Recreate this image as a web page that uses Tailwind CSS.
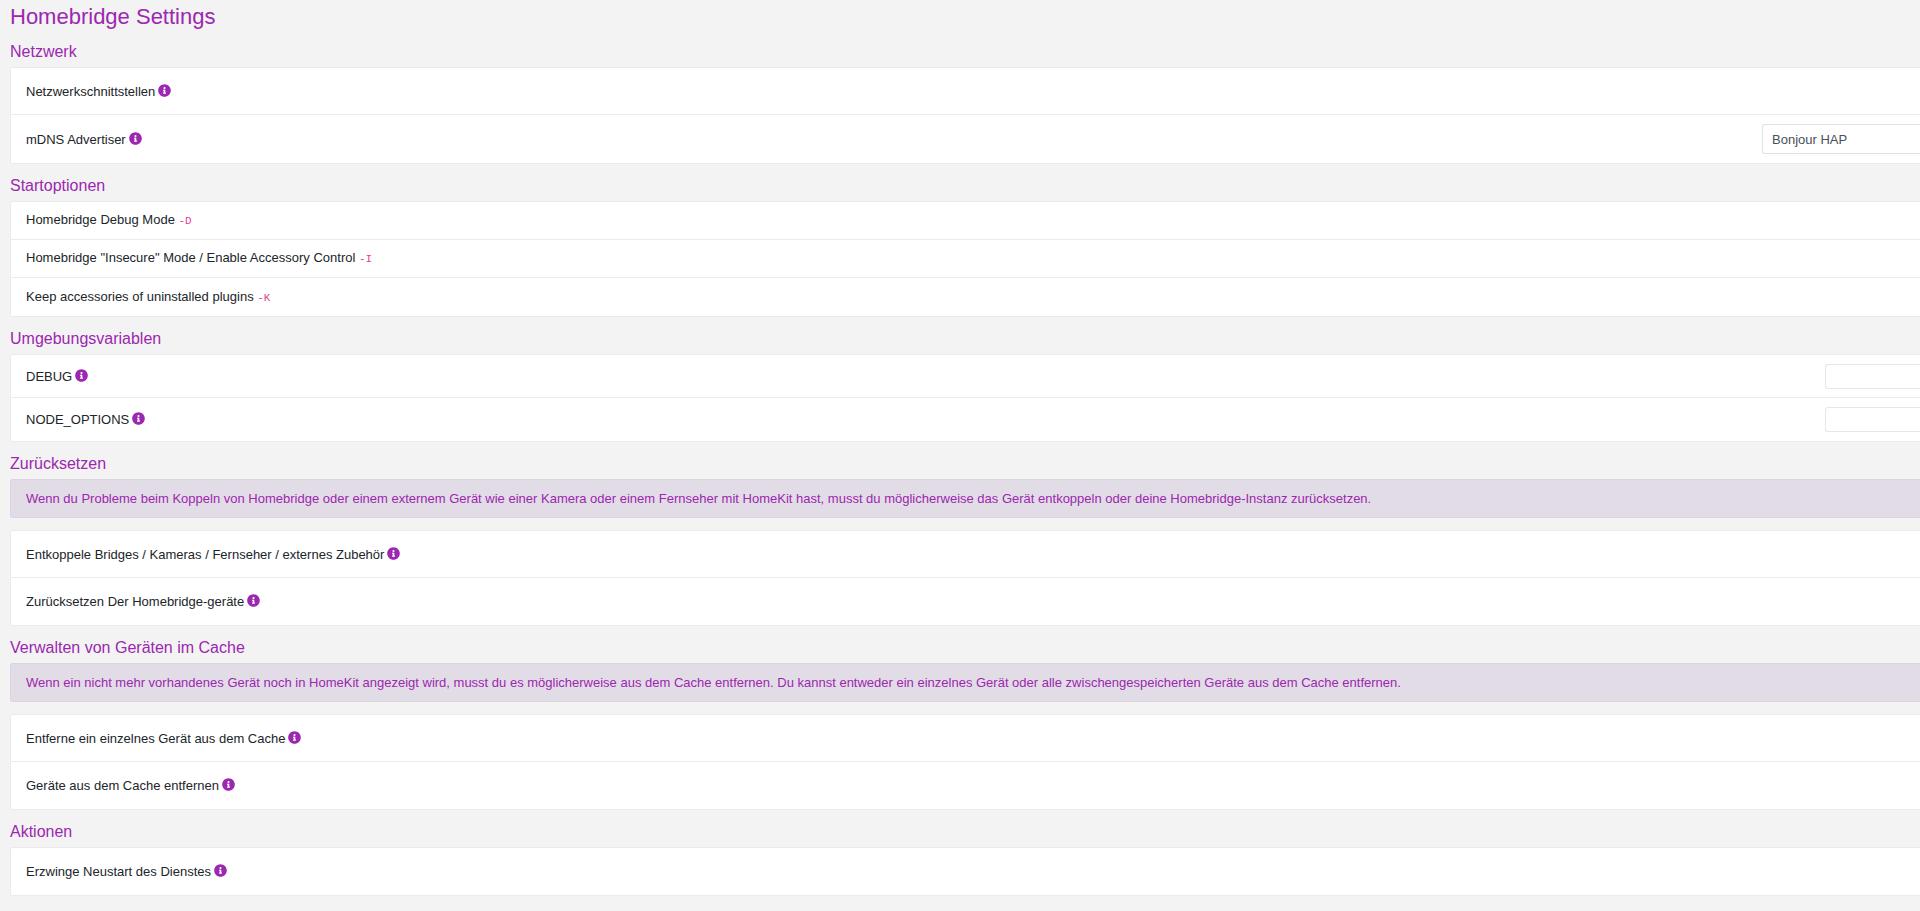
<!DOCTYPE html>
<html lang="de">
<head>
<meta charset="utf-8">
<title>Homebridge Settings</title>
<script src="https://cdn.jsdelivr.net/npm/@tailwindcss/browser@4"></script>
</head>
<body class="min-h-screen overflow-x-hidden bg-[#f3f3f3] font-['Liberation_Sans',Arial,sans-serif] text-[13px] leading-[19px] text-[#212529]">
<svg class="hidden" aria-hidden="true">
  <symbol id="info" viewBox="0 0 512 512"><path fill="currentColor" d="M256 8C119 8 8 119 8 256s111 248 248 248 248-111 248-248S393 8 256 8zm0 110c23 0 42 19 42 42s-19 42-42 42-42-19-42-42 19-42 42-42zm56 254c0 7-5 12-12 12h-88c-7 0-12-5-12-12v-24c0-7 5-12 12-12h12v-64h-12c-7 0-12-5-12-12v-24c0-7 5-12 12-12h64c7 0 12 5 12 12v100h12c7 0 12 5 12 12v24z"/></symbol>
</svg>
<main class="pl-[10px]">
  <h1 class="pt-1 text-[22px] leading-[26px] text-[#9c27b0]">Homebridge Settings</h1>

  <section>
    <h2 class="pt-[12px] pb-[5px] text-[16px] leading-5 text-[#9c27b0]">Netzwerk</h2>
    <ul class="divide-y divide-[#ebebeb] rounded-l-[2px] border border-r-0 border-[#ebebeb] bg-white">
      <li class="flex h-[47px] items-center gap-[3px] pl-[15px]">Netzwerkschnittstellen <button type="button" aria-label="Info" class="pb-[2px] text-[#9c27b0]"><svg class="size-[13px]"><use href="#info"/></svg></button></li>
      <li class="flex h-[48px] items-center gap-[3px] pl-[15px]"><label for="mdns">mDNS Advertiser</label> <button type="button" aria-label="Info" class="pb-[2px] text-[#9c27b0]"><svg class="size-[13px]"><use href="#info"/></svg></button>
        <select id="mdns" class="ml-auto h-[30px] w-[158px] appearance-none rounded-l-[3px] border border-r-0 border-[#dfe2e6] bg-white pl-[9px] text-[#495057]"><option>Bonjour HAP</option></select></li>
    </ul>
  </section>

  <section>
    <h2 class="pt-[12px] pb-[5px] text-[16px] leading-5 text-[#9c27b0]">Startoptionen</h2>
    <ul class="divide-y divide-[#ebebeb] rounded-l-[2px] border border-r-0 border-[#ebebeb] bg-white">
      <li class="flex h-[38px] items-center pl-[15px]"><span>Homebridge Debug Mode <code class="font-['Liberation_Mono',monospace] text-[11px] text-[#e83e8c]">-D</code></span></li>
      <li class="flex h-[38px] items-center pl-[15px]"><span>Homebridge "Insecure" Mode / Enable Accessory Control <code class="font-['Liberation_Mono',monospace] text-[11px] text-[#e83e8c]">-I</code></span></li>
      <li class="flex h-[38px] items-center pl-[15px]"><span>Keep accessories of uninstalled plugins <code class="font-['Liberation_Mono',monospace] text-[11px] text-[#e83e8c]">-K</code></span></li>
    </ul>
  </section>

  <section>
    <h2 class="pt-[12px] pb-[5px] text-[16px] leading-5 text-[#9c27b0]">Umgebungsvariablen</h2>
    <ul class="divide-y divide-[#ebebeb] rounded-l-[2px] border border-r-0 border-[#ebebeb] bg-white">
      <li class="flex h-[43px] items-center gap-[3px] pl-[15px]"><label for="debug">DEBUG</label> <button type="button" aria-label="Info" class="pb-[2px] text-[#9c27b0]"><svg class="size-[13px]"><use href="#info"/></svg></button>
        <input id="debug" type="text" class="ml-auto h-[25px] w-[95px] rounded-l-[3px] border border-r-0 border-[#e6e7ea] bg-white px-2"></li>
      <li class="flex h-[43px] items-center gap-[3px] pl-[15px]"><label for="node">NODE_OPTIONS</label> <button type="button" aria-label="Info" class="pb-[2px] text-[#9c27b0]"><svg class="size-[13px]"><use href="#info"/></svg></button>
        <input id="node" type="text" class="ml-auto h-[25px] w-[95px] rounded-l-[3px] border border-r-0 border-[#e6e7ea] bg-white px-2"></li>
    </ul>
  </section>

  <section>
    <h2 class="pt-[12px] pb-[5px] text-[16px] leading-5 text-[#9c27b0]">Zurücksetzen</h2>
    <p class="mb-3 rounded-l-[3px] border border-r-0 border-[#dad4e0] bg-[#e2dce6] py-[9px] pl-[15px] text-[#9c27b0]">Wenn du Probleme beim Koppeln von Homebridge oder einem externem Gerät wie einer Kamera oder einem Fernseher mit HomeKit hast, musst du möglicherweise das Gerät entkoppeln oder deine Homebridge-Instanz zurücksetzen.</p>
    <ul class="divide-y divide-[#ebebeb] rounded-l-[2px] border border-r-0 border-[#ebebeb] bg-white">
      <li class="flex h-[47px] items-center gap-[3px] pl-[15px]">Entkoppele Bridges / Kameras / Fernseher / externes Zubehör <button type="button" aria-label="Info" class="pb-[2px] text-[#9c27b0]"><svg class="size-[13px]"><use href="#info"/></svg></button></li>
      <li class="flex h-[47px] items-center gap-[3px] pl-[15px]">Zurücksetzen Der Homebridge-geräte <button type="button" aria-label="Info" class="pb-[2px] text-[#9c27b0]"><svg class="size-[13px]"><use href="#info"/></svg></button></li>
    </ul>
  </section>

  <section>
    <h2 class="pt-[12px] pb-[5px] text-[16px] leading-5 text-[#9c27b0]">Verwalten von Geräten im Cache</h2>
    <p class="mb-3 rounded-l-[3px] border border-r-0 border-[#dad4e0] bg-[#e2dce6] py-[9px] pl-[15px] text-[#9c27b0]">Wenn ein nicht mehr vorhandenes Gerät noch in HomeKit angezeigt wird, musst du es möglicherweise aus dem Cache entfernen. Du kannst entweder ein einzelnes Gerät oder alle zwischengespeicherten Geräte aus dem Cache entfernen.</p>
    <ul class="divide-y divide-[#ebebeb] rounded-l-[2px] border border-r-0 border-[#ebebeb] bg-white">
      <li class="flex h-[47px] items-center gap-[3px] pl-[15px]">Entferne ein einzelnes Gerät aus dem Cache <button type="button" aria-label="Info" class="pb-[2px] text-[#9c27b0]"><svg class="size-[13px]"><use href="#info"/></svg></button></li>
      <li class="flex h-[47px] items-center gap-[3px] pl-[15px]">Geräte aus dem Cache entfernen <button type="button" aria-label="Info" class="pb-[2px] text-[#9c27b0]"><svg class="size-[13px]"><use href="#info"/></svg></button></li>
    </ul>
  </section>

  <section>
    <h2 class="pt-[12px] pb-[5px] text-[16px] leading-5 text-[#9c27b0]">Aktionen</h2>
    <ul class="rounded-l-[2px] border border-r-0 border-[#ebebeb] bg-white">
      <li class="flex h-[47px] items-center gap-[3px] pl-[15px]">Erzwinge Neustart des Dienstes <button type="button" aria-label="Info" class="pb-[2px] text-[#9c27b0]"><svg class="size-[13px]"><use href="#info"/></svg></button></li>
    </ul>
  </section>
</main>
</body>
</html>
